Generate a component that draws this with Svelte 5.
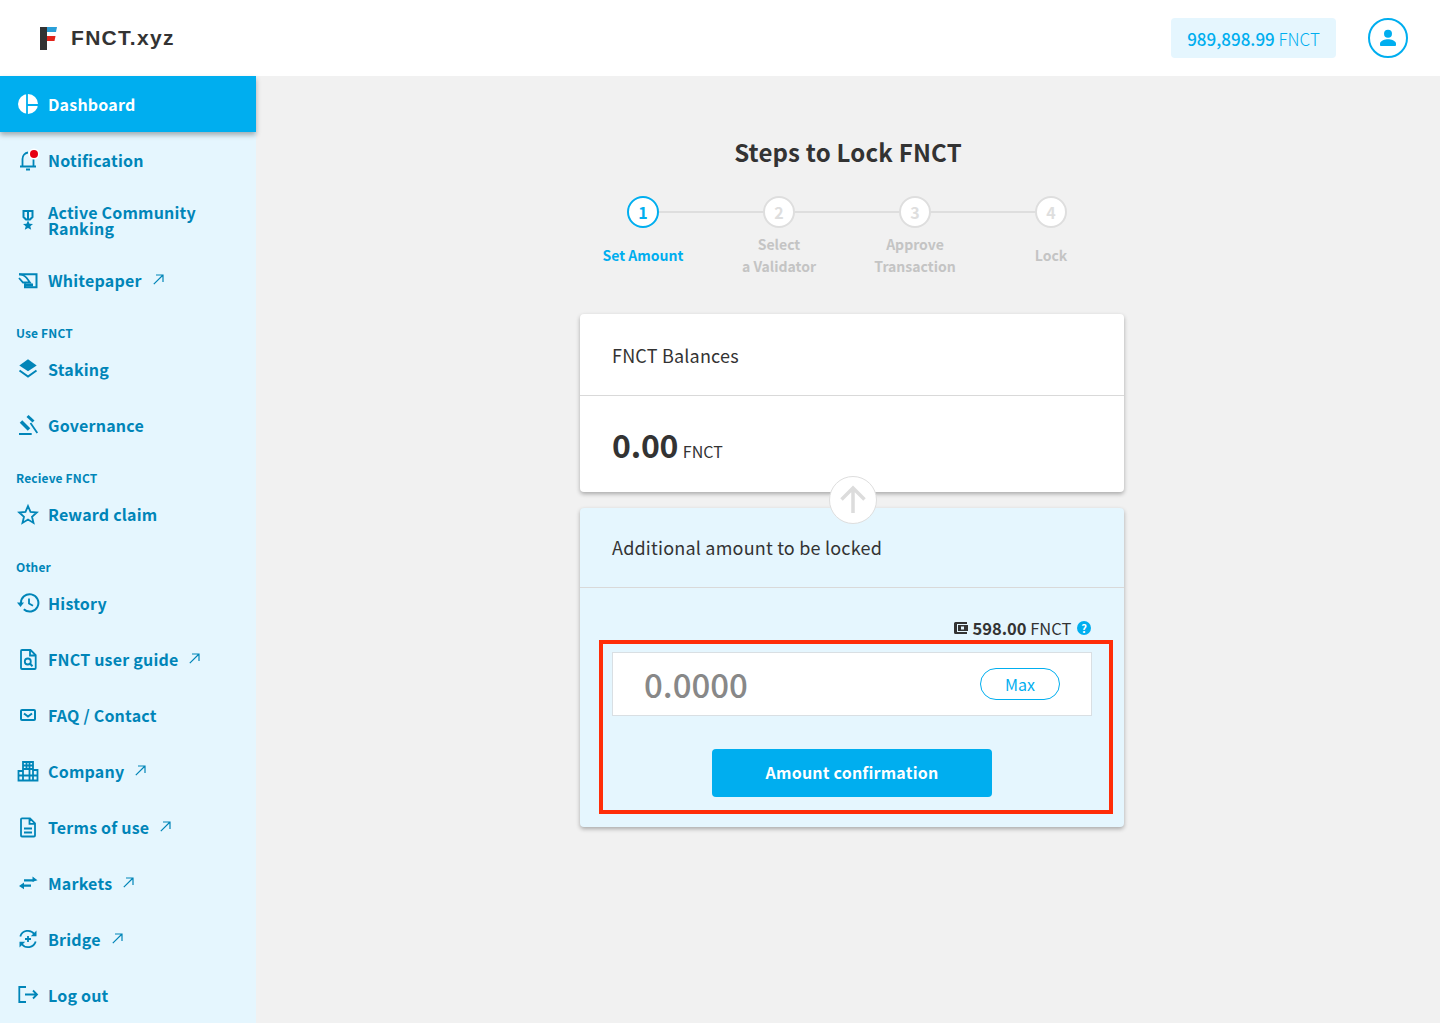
<script>
	const steps = [
		{ n: 1, label: ['Set Amount'], active: true },
		{ n: 2, label: ['Select', 'a Validator'] },
		{ n: 3, label: ['Approve', 'Transaction'] },
		{ n: 4, label: ['Lock'] }
	];

	const groups = [
		{
			items: [
				{ icon: 'dashboard', text: 'Dashboard', active: true },
				{ icon: 'bell', text: 'Notification' },
				{ icon: 'medal', text: 'Active Community Ranking', tall: true },
				{ icon: 'paper', text: 'Whitepaper', ext: true }
			]
		},
		{
			title: 'Use FNCT',
			items: [
				{ icon: 'layers', text: 'Staking' },
				{ icon: 'gavel', text: 'Governance' }
			]
		},
		{ title: 'Recieve FNCT', items: [{ icon: 'star', text: 'Reward claim' }] },
		{
			title: 'Other',
			items: [
				{ icon: 'history', text: 'History' },
				{ icon: 'guide', text: 'FNCT user guide', ext: true },
				{ icon: 'mail', text: 'FAQ / Contact' },
				{ icon: 'building', text: 'Company', ext: true },
				{ icon: 'doc', text: 'Terms of use', ext: true },
				{ icon: 'swap', text: 'Markets', ext: true },
				{ icon: 'bridge', text: 'Bridge', ext: true },
				{ icon: 'logout', text: 'Log out' }
			]
		}
	];
</script>

<div class="page">
	<header class="topbar">
		<div class="logo">
			<svg width="18" height="24" viewBox="0 0 18 24">
				<rect x="0" y="1" width="7" height="23" fill="#333" />
				<path d="M7 1h10l-1 5H7z" fill="#2a9fd8" />
				<path d="M7 10h8.500l-1 5H7z" fill="#e2231a" />
			</svg>
			<span>FNCT.xyz</span>
		</div>
		<div class="topbar-right">
			<div class="balance"><b>989,898.99</b> FNCT</div>
			<div class="avatar">
				<svg width="22" height="22" viewBox="0 0 22 22" fill="#00aeef">
					<circle cx="11" cy="6.800" r="4" />
					<path d="M3 18v-1.500c0-2.700 5.300-4.200 8-4.200s8 1.500 8 4.200V18c0 .5-.4 1-1 1H4c-.6 0-1-.5-1-1z" />
				</svg>
			</div>
		</div>
	</header>

	<div class="layout">
		<nav class="sidebar">
			{#each groups as group}
				{#if group.title}
					<div class="group-title">{group.title}</div>
				{/if}
				{#each group.items as item}
					<div class="item" class:active={item.active} class:tall={item.tall}>
						<span class="icon">
							<svg width="24" height="24" viewBox="0 0 24 24" fill="none" stroke="currentColor" stroke-width="2">
								{#if item.icon === 'dashboard'}
									<circle cx="12" cy="12" r="10" fill="currentColor" stroke="none" />
									<path d="M11 1v22M11 13h12" stroke="#00aeef" stroke-width="1.800" />
								{:else if item.icon === 'bell'}
									<path d="M4 18.500h16M6.500 18V11c0-3.500 2.500-6 5.500-6.500M17.500 11v7M10 21.500h4" stroke-width="1.800" />
									<circle cx="18" cy="6" r="5.500" fill="#fff" stroke="none" />
									<circle cx="18" cy="6" r="4" fill="#e60012" stroke="none" />
								{:else if item.icon === 'medal'}
									<path d="M7.500 2h9v6l-2.500 2.500h-4L7.500 8zM12 2v8" stroke-width="2" />
									<path d="M12 11.500l1.500 3.200 3.500.3-2.700 2.300.9 3.400-3.200-1.800-3.200 1.800.9-3.400L7 15l3.500-.3z" fill="currentColor" stroke="none" />
								{:else if item.icon === 'paper'}
									<path d="M3 5.300h17.500v13H9v-4" stroke-width="2" />
									<path d="M3 5.300c3.500 0 5.500 1 7.500 3.500l3.500 4.700H7L3 9" stroke-width="1.800" />
									<path d="M9 14.500h8v3H9z" fill="currentColor" stroke="none" />
								{:else if item.icon === 'layers'}
									<path d="M12 1.300l8.700 6.100-8.700 5.800-8.700-5.800z" fill="currentColor" stroke="none" />
									<path d="M3.500 12.500l8.500 6 8.500-6" stroke-width="2" />
								{:else if item.icon === 'gavel'}
									<path d="M11.500 2l6 5.500" stroke-width="3" />
									<path d="M5 7.500l8 8" stroke-width="3.500" />
									<path d="M14.500 9l6.800 10M3 20h12.700" stroke-width="1.800" />
								{:else if item.icon === 'star'}
									<path d="M12 3l2.500 5.900 6.300.6-4.800 4.200 1.500 6.200-5.500-3.300-5.500 3.300 1.500-6.200-4.800-4.200 6.300-.6z" stroke-width="1.800" />
								{:else if item.icon === 'history'}
									<path d="M5 11.500a8.700 8.700 0 1 1 2.800 5.800" stroke-width="2" />
									<path d="M1 10.500h7l-3.500 4.500z" fill="currentColor" stroke="none" />
									<path d="M13 6.500v5l4 2.300" stroke-width="1.800" />
								{:else if item.icon === 'guide'}
									<path d="M6 2h8.500l5.200 5.200v12.800a1 1 0 0 1-1 1H6a1 1 0 0 1-1-1V3a1 1 0 0 1 1-1zM14 2v5.500h5.500" stroke-width="1.800" />
									<circle cx="11.800" cy="13.500" r="3" stroke-width="1.800" />
									<path d="M13.800 15.500l2.700 2.700" />
								{:else if item.icon === 'mail'}
									<rect x="5" y="6" width="14" height="10" rx="1" />
									<path d="M8 9.500l4 3 4-3" />
								{:else if item.icon === 'building'}
									<path d="M7 11V2h10v8h4.500v10.500h-19V11zM10.500 2v8M13.500 2v18M7 5.500h10M7 9h10M3 15.500h18M7 11v9.500M17 10v10.500" stroke-width="1.800" />
								{:else if item.icon === 'doc'}
									<path d="M6 2.300h8l5 5v12.200a1 1 0 0 1-1 1H6a1 1 0 0 1-1-1V3.300a1 1 0 0 1 1-1zM13.500 2.300v5.500H19M8 12.500h8M8 16.500h8" stroke-width="1.800" />
								{:else if item.icon === 'swap'}
									<path d="M8 8.300h10M6 13.700h9" stroke-width="2.200" />
									<path d="M16.500 4.500l5 3.800-5 1.500zM8 10.500l-5 3.500 5 3.300z" fill="currentColor" stroke="none" />
								{:else if item.icon === 'bridge'}
									<path d="M4.300 8.500a8 8 0 0 1 14-2.500M19.700 13.500a8 8 0 0 1-14 2.500" stroke-width="1.800" />
									<path d="M20.500 2.500v5.700h-5.700zM3.500 19.500v-5.700h5.700z" fill="currentColor" stroke="none" />
									<path d="M12 8v6M9 11h6" stroke-width="1.800" />
								{:else if item.icon === 'logout'}
									<path d="M10 3H3.300v15H10M9 10.500h12M17 6.500l4 4-4 4" stroke-width="1.800" />
								{/if}
							</svg>
						</span>
						<span class="label">{item.text}</span>
						{#if item.ext}
							<svg class="ext" width="11" height="11" viewBox="0 0 11 11" fill="none" stroke="currentColor" stroke-width="1.200">
								<path d="M.8 10.200L10 1M3 1h7v7" />
							</svg>
						{/if}
					</div>
				{/each}
			{/each}
		</nav>

		<main class="content">
			<h1>Steps to Lock FNCT</h1>
			<div class="stepper">
				{#each steps as step}
					<div class="step" class:active={step.active}>
						<div class="circle">{step.n}</div>
						<div class="step-label">
							{#each step.label as line}
								<div>{line}</div>
							{/each}
						</div>
					</div>
				{/each}
			</div>

			<section class="card">
				<div class="card-head">FNCT Balances</div>
				<div class="card-value"><b>0.00</b> <span>FNCT</span></div>
				<div class="arrow">
					<svg width="30" height="30" viewBox="0 0 30 30" fill="none" stroke="#dcdcdc" stroke-width="3.500">
						<path d="M15 28V3M3.500 14.500L15 3l11.500 11.500" />
					</svg>
				</div>
			</section>

			<section class="card blue">
				<div class="card-head">Additional amount to be locked</div>
				<div class="card-body">
					<div class="wallet">
						<svg width="14" height="12" viewBox="0 0 14 12">
							<path d="M1.500 0H13v2H3v8h10v2H1.500A1.500 1.500 0 0 1 0 10.500v-9A1.500 1.500 0 0 1 1.500 0z" fill="#333" />
							<path d="M4 3h10v6H4z" fill="#333" />
							<rect x="7" y="4.500" width="3" height="3" fill="#e5f6fe" />
						</svg>
						<b>598.00</b> FNCT
						<span class="help">?</span>
					</div>
					<div class="highlight">
						<div class="amount">
							<span class="placeholder">0.0000</span>
							<button class="max">Max</button>
						</div>
						<button class="confirm">Amount confirmation</button>
					</div>
				</div>
			</section>
		</main>
	</div>
</div>

<style>
	:global(body) {
		background: #f1f1f1;
	}

	.page {
		font-family: 'Noto Sans CJK JP', 'Noto Sans', sans-serif;
		color: #333;
		height: 1023px;
		overflow: hidden;
	}

	.topbar {
		height: 76px;
		background: #fff;
		display: flex;
		align-items: center;
		justify-content: space-between;
		padding: 0 32px 0 40px;
	}

	.logo {
		display: flex;
		align-items: center;
		gap: 13px;
		font-family: 'Liberation Sans', Arial, sans-serif;
		font-weight: 700;
		font-size: 21px;
		letter-spacing: 1.300px;
		line-height: 26px;
		color: #333;
	}

	.topbar-right {
		display: flex;
		align-items: center;
		gap: 32px;
	}

	.balance {
		width: 165px;
		height: 40px;
		background: #e5f6fe;
		border-radius: 4px;
		color: #00aeef;
		font-size: 17px;
		line-height: 41px;
		text-align: center;
		font-weight: 300;
		white-space: nowrap;
	}

	.balance b {
		font-weight: 500;
	}

	.avatar {
		width: 40px;
		height: 40px;
		box-sizing: border-box;
		border: 2px solid #00aeef;
		border-radius: 50%;
		display: flex;
		align-items: center;
		justify-content: center;
	}

	.layout {
		display: flex;
		height: 947px;
	}

	.sidebar {
		width: 256px;
		flex: none;
		background: #e5f6fe;
		color: #0085b8;
	}

	.group-title {
		height: 33px;
		box-sizing: border-box;
		padding: 14px 0 0 16px;
		font-size: 12px;
		line-height: 19px;
		font-weight: 700;
		letter-spacing: 0.15px;
	}

	.item {
		height: 56px;
		display: flex;
		align-items: center;
		padding-left: 16px;
		font-size: 16px;
		font-weight: 700;
		letter-spacing: 0.2px;
		position: relative;
	}

	.label {
		margin-top: -2px;
	}

	.item.active .label,
	.item.active + .item .label {
		margin-top: 0;
	}

	.item.tall {
		height: 65px;
	}

	.item.tall .label {
		width: 170px;
		line-height: 16px;
	}

	.item.active {
		background: #00aeef;
		color: #fff;
		box-shadow: 0 3px 5px rgba(0, 0, 0, 0.3);
	}

	.icon {
		width: 24px;
		height: 24px;
		margin-right: 8px;
		display: flex;
	}

	.ext {
		margin-left: 11px;
		margin-top: -3px;
	}

	.content {
		flex: 1;
		display: flex;
		flex-direction: column;
		align-items: center;
	}

	h1 {
		margin: 58px 0 0;
		font-size: 24px;
		line-height: 36px;
		font-weight: 700;
		letter-spacing: 0.2px;
		color: #333;
	}

	.stepper {
		display: flex;
		margin-top: 26px;
		margin-right: 2px;
		height: 118px;
	}

	.step {
		width: 136px;
		display: flex;
		flex-direction: column;
		align-items: center;
		position: relative;
		color: #c4c4c4;
	}

	.step:not(:last-child)::after {
		content: '';
		position: absolute;
		left: 68px;
		top: 15px;
		width: 136px;
		height: 2px;
		background: #dedede;
	}

	.circle {
		width: 32px;
		height: 32px;
		box-sizing: border-box;
		border: 2px solid #dedede;
		background: #fff;
		border-radius: 50%;
		display: flex;
		align-items: center;
		justify-content: center;
		font-size: 16px;
		font-weight: 700;
		color: #dedede;
		position: relative;
		z-index: 1;
	}

	.step.active {
		color: #00aeef;
	}

	.step.active .circle {
		border-color: #00aeef;
		color: #00aeef;
	}

	.step-label {
		height: 54px;
		display: flex;
		flex-direction: column;
		justify-content: center;
		text-align: center;
		font-size: 14px;
		line-height: 22px;
		font-weight: 700;
		white-space: nowrap;
	}

	.card {
		width: 544px;
		margin-left: 8px;
		background: #fff;
		border-radius: 4px;
		box-shadow: 0 2px 4px rgba(0, 0, 0, 0.3);
		position: relative;
		box-sizing: border-box;
		height: 178px;
		margin-top: 0;
	}

	.card-head {
		height: 82px;
		box-sizing: border-box;
		padding: 0 32px;
		display: flex;
		align-items: center;
		font-size: 18px;
		font-weight: 400;
		letter-spacing: 0.2px;
		border-bottom: 1px solid #d9d9d9;
	}

	.card-value {
		padding: 25px 32px 0;
		font-size: 16px;
		line-height: 46px;
		font-weight: 400;
	}

	.card-value b {
		font-size: 32px;
		font-weight: 700;
		letter-spacing: -0.2px;
	}

	.card-value span {
		margin-left: 1px;
	}

	.arrow {
		position: absolute;
		left: 249px;
		top: 162px;
		width: 48px;
		height: 48px;
		box-sizing: border-box;
		border: 1px solid #dedede;
		border-radius: 50%;
		background: #fff;
		display: flex;
		align-items: center;
		justify-content: center;
		z-index: 2;
	}

	.card.blue {
		background: #e5f6fe;
		margin-top: 16px;
		height: 319px;
	}

	.blue .card-head {
		height: 80px;
		padding-bottom: 2px;
	}

	.card-body {
		padding-top: 30px;
	}

	.wallet {
		display: flex;
		align-items: center;
		justify-content: flex-end;
		height: 20px;
		padding-right: 33px;
		font-size: 16.500px;
		font-weight: 400;
		white-space: pre;
	}

	.wallet svg {
		margin-right: 4px;
	}

	.wallet b {
		font-weight: 700;
	}

	.help {
		width: 14px;
		height: 14px;
		border-radius: 50%;
		background: #00aeef;
		color: #fff;
		font-size: 11px;
		line-height: 14px;
		font-weight: 700;
		text-align: center;
		margin-left: 2px;
	}

	.highlight {
		width: 514px;
		height: 174px;
		box-sizing: border-box;
		margin: 2px 0 0 19px;
		border: 4px solid #ff2d08;
		padding: 8px 17px 0 9px;
	}

	.amount {
		height: 64px;
		box-sizing: border-box;
		background: #fff;
		border: 1px solid #d9dfe3;
		display: flex;
		align-items: center;
		justify-content: space-between;
		padding: 0 31px;
	}

	.placeholder {
		font-size: 33px;
		font-weight: 500;
		color: #888;
		line-height: 64px;
	}

	.max {
		width: 80px;
		height: 32px;
		background: #fff;
		border: 1px solid #00aeef;
		border-radius: 16px;
		color: #00aeef;
		font: 400 16px 'Noto Sans CJK JP', sans-serif;
		padding: 0;
	}

	.confirm {
		display: block;
		width: 280px;
		height: 48px;
		margin: 33px 0 0 100px;
		background: #00aeef;
		border: none;
		border-radius: 4px;
		color: #fff;
		font: 700 16px 'Noto Sans CJK JP', sans-serif;
		letter-spacing: 0.2px;
		padding: 0 0 2px;
	}
</style>
